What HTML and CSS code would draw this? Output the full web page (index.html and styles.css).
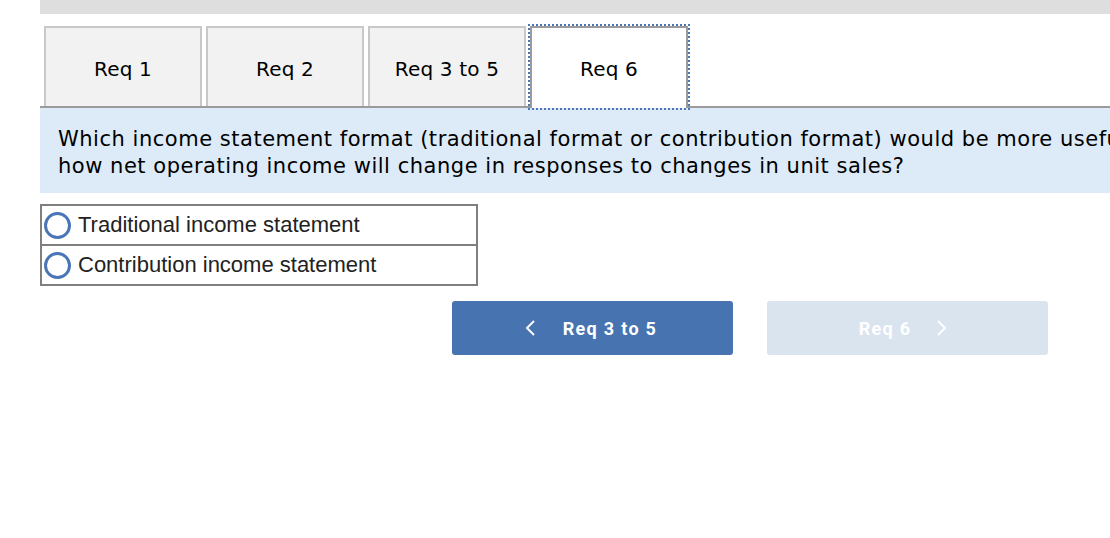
FILE: index.html
```html
<!DOCTYPE html>
<html>
<head>
<meta charset="utf-8">
<link rel="stylesheet" href="styles.css">
</head>
<body>
<div class="wrap">
  <div class="topbar"></div>
  <div class="tabs">
    <div class="tab">Req 1</div>
    <div class="tab">Req 2</div>
    <div class="tab">Req 3 to 5</div>
    <div class="tab active">Req 6</div>
  </div>
  <div class="question">
    <p>Which income statement format (traditional format or contribution format) would be more useful<br>how net operating income will change in responses to changes in unit sales?</p>
  </div>
  <div class="options">
    <label class="option"><span class="radio"></span><span class="otext">Traditional income statement</span></label>
    <label class="option"><span class="radio"></span><span class="otext">Contribution income statement</span></label>
  </div>
  <div class="nav">
    <div class="btn prev">
      <svg class="chev" width="12" height="18" viewBox="0 0 12 18"><path d="M10 2 L3 9 L10 16" fill="none" stroke="#fff" stroke-width="2"/></svg>
      <span>Req 3 to 5</span>
    </div>
    <div class="btn next">
      <span>Req 6</span>
      <svg class="chev" width="12" height="18" viewBox="0 0 12 18"><path d="M2 2 L9 9 L2 16" fill="none" stroke="#fff" stroke-width="2"/></svg>
    </div>
  </div>
</div>
</body>
</html>
```

FILE: styles.css
```css
html, body {
  margin: 0;
  padding: 0;
  background: #fff;
  overflow: hidden;
}
body {
  width: 1110px;
  height: 538px;
}
.wrap {
  margin-left: 40px;
  width: 1200px;
}
.topbar {
  height: 14px;
  width: 1070px;
  background: #dedede;
}
.tabs {
  display: flex;
  gap: 4px;
  padding-left: 4px;
  margin-top: 12px;
  border-bottom: 2px solid #9b9b9b;
  height: 80px;
}
.tab {
  width: 154px;
  height: 74px;
  padding-top: 4px;
  box-sizing: content-box;
  background: #f2f2f2;
  border: 2px solid #c8c8c8;
  border-bottom: none;
  display: flex;
  align-items: center;
  justify-content: center;
  font-family: "DejaVu Sans", Verdana, sans-serif;
  font-size: 20px;
  letter-spacing: 0.2px;
  line-height: 1;
  color: #000;
}
.tab.active {
  background: #fff;
  border-color: #9b9b9b;
  height: 78px;
  padding-top: 2px;
  outline: 2px dotted #4a76b8;
  outline-offset: 0;
  position: relative;
  z-index: 1;
}
.question {
  background: #ddebf8;
  height: 85px;
  box-sizing: border-box;
  padding: 18px 0 0 18px;
}
.question p {
  margin: 0;
  font-family: "DejaVu Sans", Verdana, sans-serif;
  font-size: 21px;
  letter-spacing: 0.52px;
  line-height: 27px;
  color: #000;
  white-space: nowrap;
}
.options {
  margin-top: 11px;
  width: 434px;
  border: 2px solid #7f7f7f;
}
.option {
  display: flex;
  align-items: center;
  height: 38px;
  padding-left: 2px;
  font-family: "Liberation Sans", Arial, sans-serif;
  font-size: 22px;
  color: #222;
}
.option + .option {
  border-top: 2px solid #7f7f7f;
}
.radio {
  width: 21px;
  height: 21px;
  border: 3px solid #4a76b8;
  border-radius: 50%;
  margin-right: 7px;
  flex: none;
}
.nav {
  display: flex;
  gap: 34px;
  margin-top: 15px;
  margin-left: 412px;
}
.btn {
  width: 281px;
  height: 54px;
  border-radius: 3px;
  box-sizing: border-box;
  display: flex;
  align-items: center;
  justify-content: center;
  font-family: Roboto, "Liberation Sans", sans-serif;
  font-weight: 700;
  font-size: 18px;
  letter-spacing: 1.3px;
  color: #fff;
}
.prev {
  background: #4773b0;
  gap: 27px;
  padding-right: 4px;
}
.next {
  background: #dae4ef;
  gap: 25px;
  padding-right: 8px;
}
.chev {
  display: block;
}
```
